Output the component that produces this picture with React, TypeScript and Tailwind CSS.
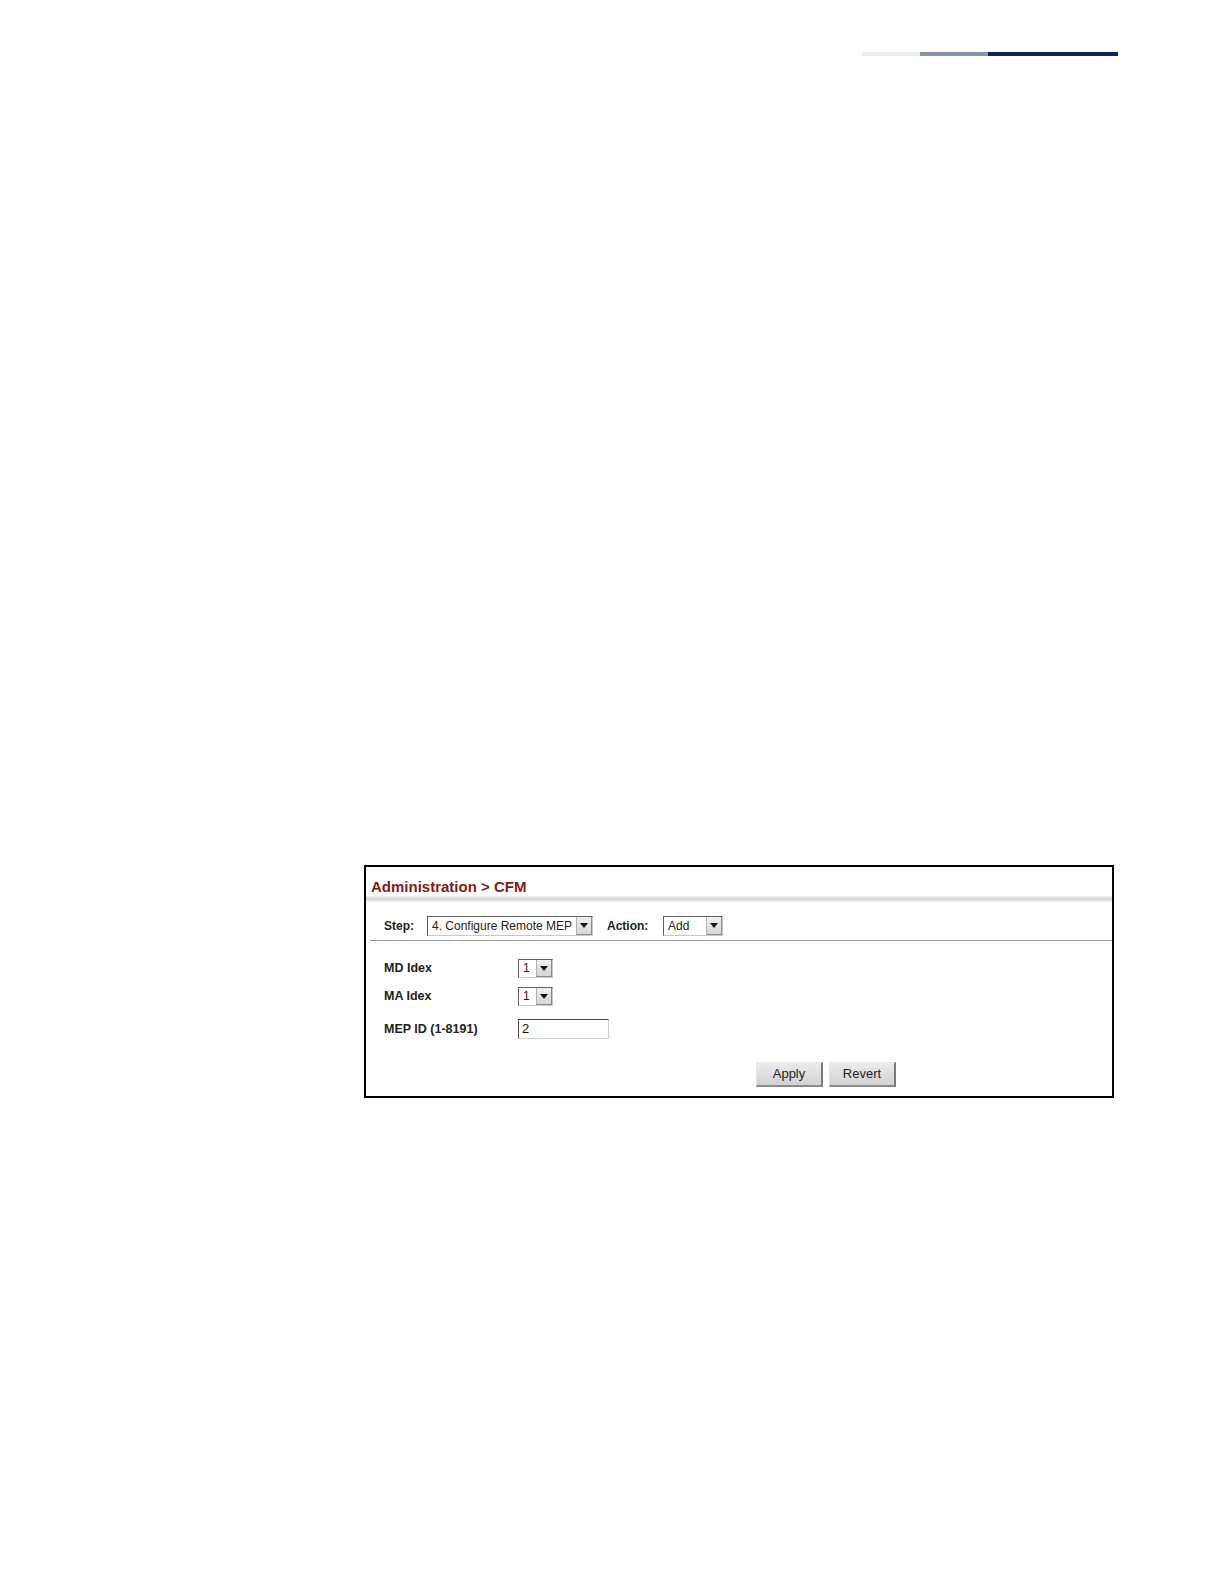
import React from "react";

function Select({ value, width }: { value: string; width: string }) {
  return (
    <div
      className={`flex items-stretch h-[20px] ${width} border border-t-[#5e5e5e] border-l-[#5e5e5e] border-r-[#c8c8c8] border-b-[#c8c8c8] bg-white`}
    >
      <span className="flex-1 pl-[4px] text-[12px] leading-[18px] text-[#222] whitespace-nowrap overflow-hidden">
        {value}
      </span>
      <Arrow />
    </div>
  );
}

function SmallSelect({ value }: { value: string }) {
  return (
    <div className="flex items-stretch h-[19px] w-[35px] border border-t-[#5e5e5e] border-l-[#5e5e5e] border-r-[#c8c8c8] border-b-[#c8c8c8] bg-white">
      <span className="flex-1 pl-[4px] text-[12px] leading-[17px] text-[#222]">{value}</span>
      <Arrow />
    </div>
  );
}

function Arrow() {
  return (
    <span className="w-[16px] flex items-center justify-center bg-gradient-to-b from-[#f0f0f0] to-[#d6d6d6] border-l border-[#b0b0b0] border-r border-r-[#8a8a8a] border-b border-b-[#8a8a8a]">
      <svg width="8" height="5" viewBox="0 0 8 5">
        <path d="M0 0 L8 0 L4 5 Z" fill="#111" />
      </svg>
    </span>
  );
}

function Button({ label }: { label: string }) {
  return (
    <button className="h-[25px] w-[67px] text-[13px] text-[#222] bg-gradient-to-b from-[#ececec] to-[#d2d2d2] border border-t-[#e6e6e6] border-l-[#e6e6e6] border-r-2 border-r-[#7a7a7a] border-b-2 border-b-[#8a8a8a]">
      {label}
    </button>
  );
}

export default function App() {
  return (
    <div className="min-h-[1584px] bg-white font-['Liberation_Sans',Arial,sans-serif]">
      {/* header rule */}
      <div className="flex justify-end pt-[52px] pr-[106px]">
        <div className="h-[4px] w-[58px] bg-[#e9ecf1]" />
        <div className="h-[4px] w-[68px] bg-[#8592aa]" />
        <div className="h-[4px] w-[130px] bg-[#0b2262]" />
      </div>

      {/* screenshot panel */}
      <div className="ml-[364px] mt-[809px] w-[750px] h-[233px] border-2 border-black flex flex-col">
        <div className="pt-[11px] pl-[5px] text-[15px] leading-[18px] font-bold text-[#84191b]">
          Administration &gt; CFM
        </div>
        <div className="h-[6px] bg-gradient-to-b from-[#f4f4f4] via-[#d2d2d2] to-[#f6f6f6]" />

        <div className="ml-[4px] pl-[14px] pt-[14px] pb-[4px] border-b border-[#9a9a9a] flex items-center">
          <span className="text-[12px] font-bold text-[#222] w-[43px]">Step:</span>
          <Select value="4. Configure Remote MEP" width="w-[166px]" />
          <span className="ml-[14px] text-[12px] font-bold text-[#222] w-[56px]">Action:</span>
          <Select value="Add" width="w-[60px]" />
        </div>

        <div className="pl-[18px] pt-[18px] flex flex-col">
          <div className="flex items-center h-[19px]">
            <span className="w-[134px] text-[12.5px] font-bold text-[#222]">MD Idex</span>
            <SmallSelect value="1" />
          </div>
          <div className="flex items-center h-[19px] mt-[9px]">
            <span className="w-[134px] text-[12.5px] font-bold text-[#222]">MA Idex</span>
            <SmallSelect value="1" />
          </div>
          <div className="flex items-center h-[20px] mt-[13px]">
            <span className="w-[134px] text-[12.5px] font-bold text-[#222]">MEP ID (1-8191)</span>
            <div className="h-[20px] w-[91px] border border-t-[#4a4a4a] border-l-[#4a4a4a] border-r-[#d0d0d0] border-b-[#d0d0d0] pl-[3px] text-[13px] leading-[18px] text-[#111]">
              2
            </div>
          </div>
        </div>

        <div className="flex gap-[6px] pl-[390px] pt-[23px]">
          <Button label="Apply" />
          <Button label="Revert" />
        </div>
      </div>
    </div>
  );
}
